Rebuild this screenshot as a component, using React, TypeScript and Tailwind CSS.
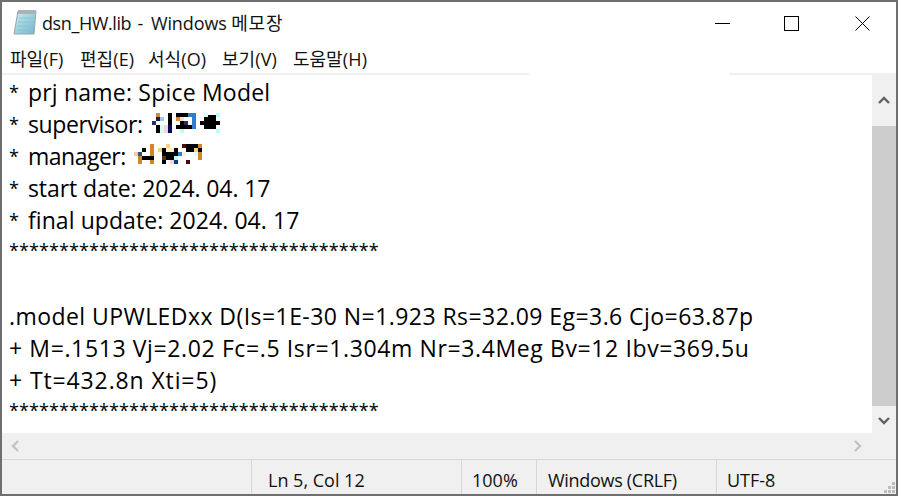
const SANS = "font-['Open_Sans','Noto_Sans_CJK_KR',sans-serif]";

type R = [number, number, number, number, string];

const supervisor: R[] = [
  [78, 24, 12, 12, "#d98a30"], [78, 36, 12, 12, "#14204e"], [90, 36, 12, 12, "#a9c8ee"], [66, 48, 12, 12, "#2d2d55"],
  [114, 24, 12, 36, "#000"], [78, 60, 12, 24, "#000"], [90, 60, 12, 24, "#d8fbf6"], [102, 60, 12, 24, "#f9d3d8"], [114, 60, 12, 24, "#0a0a60"],
  [138, 24, 36, 12, "#000"], [138, 36, 12, 12, "#d98a30"], [150, 36, 12, 12, "#f3e3c8"], [162, 48, 12, 12, "#2d2d55"], [150, 48, 12, 12, "#000"],
  [174, 24, 24, 48, "#2f7fd0"], [174, 36, 12, 24, "#fff"], [138, 60, 36, 12, "#000"], [174, 60, 12, 12, "#000"], [150, 72, 12, 12, "#b5ffff"],
  [222, 24, 12, 12, "#d8ffff"], [258, 24, 12, 12, "#b5ffff"], [234, 30, 24, 42, "#000"], [222, 36, 36, 24, "#000"], [210, 48, 60, 12, "#000"], [258, 72, 12, 12, "#b5ffff"], [222, 60, 36, 12, "#000"],
];

const manager: R[] = [
  [66, 117, 12, 36, "#d3852c"], [42, 129, 12, 12, "#000"], [18, 141, 12, 12, "#f5c9a8"], [30, 141, 12, 12, "#33557a"],
  [42, 153, 36, 12, "#000"], [30, 153, 12, 24, "#d3852c"], [66, 165, 12, 12, "#d3852c"],
  [114, 117, 12, 12, "#f7d27e"], [90, 129, 12, 12, "#f7d27e"], [102, 129, 36, 12, "#fbeecb"], [102, 129, 12, 12, "#000"], [138, 129, 12, 12, "#000"],
  [102, 141, 48, 24, "#000"], [102, 153, 12, 12, "#5a3410"], [138, 153, 12, 12, "#b5ffff"], [150, 141, 12, 12, "#2f7fd0"],
  [102, 165, 12, 12, "#000"], [126, 165, 12, 12, "#f9d3d8"], [138, 165, 12, 12, "#0a3a8a"],
  [162, 117, 12, 12, "#4a0a10"], [174, 117, 36, 12, "#000"], [210, 117, 12, 12, "#d3852c"], [174, 129, 24, 12, "#000"], [198, 129, 12, 12, "#f7d27e"], [210, 129, 12, 12, "#000"],
  [162, 141, 12, 12, "#fbf3d8"], [198, 141, 12, 12, "#d8ffff"], [210, 141, 12, 24, "#d3852c"], [174, 165, 12, 12, "#4a0a10"],
];

const Mosaic = ({ rects, box, className, w, h }: { rects: R[]; box: string; className: string; w: number; h: number }) => (
  <svg width={w} height={h} viewBox={box} className={className} shapeRendering="crispEdges">
    {rects.map(([x, y, rw, rh, c], i) => (
      <rect key={i} x={x} y={y} width={rw} height={rh} fill={c} />
    ))}
  </svg>
);

const Chevron = ({ d, color }: { d: string; color: string }) => (
  <svg width="12" height="12" viewBox="0 0 12 12" fill="none">
    <path d={d} stroke={color} strokeWidth="2.4" />
  </svg>
);

const MenuItem = ({ ko, en, className }: { ko: string; en: string; className: string }) => (
  <span className={`whitespace-nowrap text-[18px] ${className}`}>
    {ko}
    <span className="text-[18px] tracking-[0.2px]">{en}</span>
  </span>
);

const Star = () => (
  <span className="inline-block w-[19px] text-[18px] align-[2px] tracking-normal">*</span>
);

const Stars = () => (
  <div className="h-[32px] text-[18px] leading-[28px] tracking-[0.08px]">*************************************</div>
);

export default function App() {
  return (
    <div className={`w-[898px] h-[496px] flex flex-col overflow-hidden bg-white border-2 border-[#6f6f6f] text-[#111] relative ${SANS}`}>
      <div className="h-[42px] flex items-center shrink-0">
        <svg width="24" height="26" viewBox="0 0 24 26" className="ml-[11px] mr-[5px] mt-[-2px]">
          <defs>
            <linearGradient id="pad" x1="0" y1="0" x2="1" y2="1">
              <stop offset="0" stopColor="#d2eef2" />
              <stop offset="1" stopColor="#6fb4cc" />
            </linearGradient>
          </defs>
          <path d="M5 2H23L21 25H1Z" fill="url(#pad)" stroke="#9aa5a5" strokeWidth="1" />
          <path d="M5 1H23V5H5Z" fill="#a9b3b8" />
          <path d="M6 9H21M5 13H21M4 17H20M4 21H20" stroke="#86c4d6" strokeWidth="1" />
        </svg>
        <span className="text-[18px] leading-none whitespace-pre">
          <span className="tracking-[-0.4px]">dsn_HW.lib</span>
          <span className="tracking-[1.5px]"> - </span>
          <span className="tracking-[-0.1px]">Windows </span>
          <span className="tracking-[0.7px]">메모장</span>
        </span>
        <div className="ml-auto flex items-center h-full">
          <svg width="15" height="15" viewBox="0 0 15 15" className="mr-[54px]"><path d="M0 7.5H15" stroke="#000" /></svg>
          <svg width="15" height="15" viewBox="0 0 15 15" className="mr-[56px]"><rect x="0.5" y="0.5" width="14" height="14" fill="none" stroke="#000" /></svg>
          <svg width="15" height="15" viewBox="0 0 15 15" className="mr-[26px]"><path d="M0.5 0.5L14.5 14.5M14.5 0.5L0.5 14.5" stroke="#000" /></svg>
        </div>
      </div>
      <div className="h-[29px] flex items-center pl-[8px] shrink-0 pt-[2px]">
        <MenuItem ko="파일" en="(F)" className="w-[70px]" />
        <MenuItem ko="편집" en="(E)" className="w-[68px]" />
        <MenuItem ko="서식" en="(O)" className="w-[74px]" />
        <MenuItem ko="보기" en="(V)" className="w-[71px]" />
        <MenuItem ko="도움말" en="(H)" className="w-[90px]" />
      </div>
      <div className="h-[2px] flex shrink-0">
        <div className="w-[527px] bg-[#f0f0f0]" />
        <div className="w-[200px]" />
        <div className="flex-1 bg-[#f0f0f0]" />
      </div>
      <div className="flex-1 flex min-h-0">
        <div className="flex-1 pl-[7px] pt-[1px] text-[23px] leading-[32px] text-black whitespace-pre">
          <div className="tracking-[0.2px]"><Star />prj name: Spice Model</div>
          <div className="flex items-start">
            <span className="tracking-[-0.4px]"><Star />supervisor:</span>
            <Mosaic rects={supervisor} box="66 24 204 60" w={68} h={20} className="ml-[9px] mt-[5px]" />
          </div>
          <div className="flex items-start">
            <span className="tracking-[-0.5px]"><Star />manager:</span>
            <Mosaic rects={manager} box="18 117 204 60" w={68} h={20} className="ml-[8px] mt-[4px]" />
          </div>
          <div className="tracking-[-0.1px]"><Star />start date: 2024. 04. 17</div>
          <div className="tracking-[0.07px]"><Star />final update: 2024. 04. 17</div>
          <Stars />
          <div>&nbsp;</div>
          <div className="tracking-[0.44px]">.model UPWLEDxx D(Is=1E-30 N=1.923 Rs=32.09 Eg=3.6 Cjo=63.87p</div>
          <div className="tracking-[0.62px]">+ M=.1513 Vj=2.02 Fc=.5 Isr=1.304m Nr=3.4Meg Bv=12 Ibv=369.5u</div>
          <div className="tracking-[0.88px]">+ Tt=432.8n Xti=5)</div>
          <Stars />
        </div>
        <div className="w-[24px] bg-[#f0f0f0] flex flex-col shrink-0">
          <div className="h-[51px] flex items-center justify-center"><Chevron d="M1 8L6 3L11 8" color="#606060" /></div>
          <div className="flex-1 bg-[#cdcdcd]" />
          <div className="h-[27px] flex items-center justify-center"><Chevron d="M1 4L6 9L11 4" color="#606060" /></div>
        </div>
      </div>
      <div className="h-[26px] bg-[#f0f0f0] flex items-center justify-between pl-[8px] pr-[33px] shrink-0">
        <Chevron d="M8 1L3 6L8 11" color="#c4c4c4" />
        <Chevron d="M4 1L9 6L4 11" color="#c4c4c4" />
      </div>
      <div className="h-[35px] bg-[#f0f0f0] border-t border-[#d7d7d7] flex items-stretch text-[18px] shrink-0">
        <div className="w-[250px] border-r border-[#d7d7d7]" />
        <div className="w-[210px] pl-[16px] pt-[6px] flex items-center border-r border-[#d7d7d7]">Ln 5, Col 12</div>
        <div className="w-[75px] pl-[10px] pt-[6px] flex items-center border-r border-[#d7d7d7]">100%</div>
        <div className="w-[180px] pl-[11px] pt-[6px] flex items-center border-r border-[#d7d7d7] tracking-[-0.3px]">Windows (CRLF)</div>
        <div className="pl-[10px] pt-[6px] flex items-center">UTF-8</div>
      </div>
      <svg width="12" height="12" viewBox="0 0 12 12" className="absolute right-0 bottom-0" fill="#bdbdbd">
        <rect x="8" y="0" width="3" height="3" />
        <rect x="4" y="4" width="3" height="3" />
        <rect x="8" y="4" width="3" height="3" />
        <rect x="0" y="8" width="3" height="3" />
        <rect x="4" y="8" width="3" height="3" />
        <rect x="8" y="8" width="3" height="3" />
      </svg>
    </div>
  );
}
